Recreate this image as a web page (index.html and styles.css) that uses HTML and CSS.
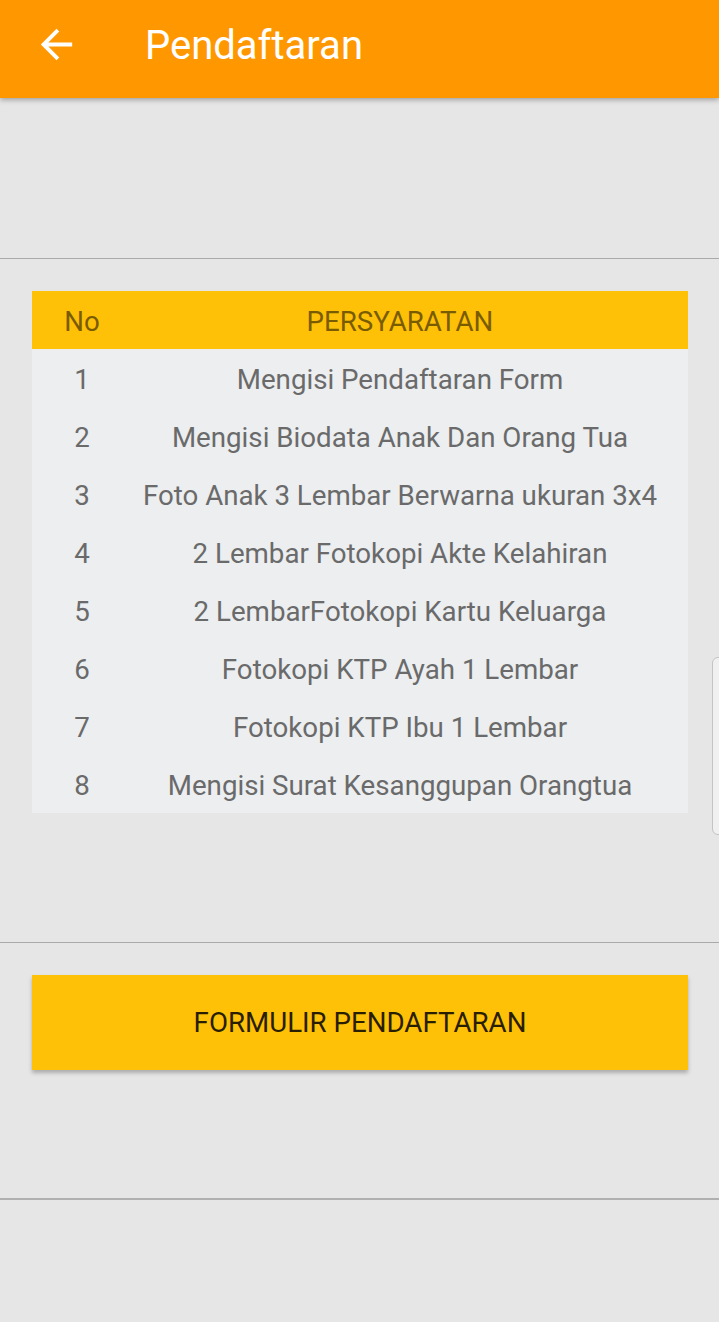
FILE: index.html
```html
<!DOCTYPE html>
<html>
<head>
<meta charset="utf-8">
<link rel="stylesheet" href="styles.css">
</head>
<body>
<header class="appbar">
  <svg class="back" viewBox="0 0 24 24" width="47" height="47"><path fill="#fff" d="M20 11H7.83l5.59-5.59L12 4l-8 8 8 8 1.41-1.41L7.83 13H20v-2z"/></svg>
  <h1 class="title">Pendaftaran</h1>
</header>
<main class="content">
  <div class="spacer-top"></div>
  <hr class="divider">
  <section class="table">
    <div class="thead">
      <div class="c-no">No</div>
      <div class="c-text">PERSYARATAN</div>
    </div>
    <div class="row"><div class="c-no">1</div><div class="c-text">Mengisi Pendaftaran Form</div></div>
    <div class="row"><div class="c-no">2</div><div class="c-text">Mengisi Biodata Anak Dan Orang Tua</div></div>
    <div class="row"><div class="c-no">3</div><div class="c-text">Foto Anak 3 Lembar Berwarna ukuran 3x4</div></div>
    <div class="row"><div class="c-no">4</div><div class="c-text">2 Lembar Fotokopi Akte Kelahiran</div></div>
    <div class="row"><div class="c-no">5</div><div class="c-text">2 LembarFotokopi Kartu Keluarga</div></div>
    <div class="row"><div class="c-no">6</div><div class="c-text">Fotokopi KTP Ayah 1 Lembar</div></div>
    <div class="row"><div class="c-no">7</div><div class="c-text">Fotokopi KTP Ibu 1 Lembar</div></div>
    <div class="row"><div class="c-no">8</div><div class="c-text">Mengisi Surat Kesanggupan Orangtua</div></div>
  </section>
  <hr class="divider mid">
  <button class="btn">FORMULIR PENDAFTARAN</button>
  <hr class="divider bottom">
</main>
<div class="scroll-edge"></div>
</body>
</html>
```
FILE: styles.css
```css
* { box-sizing: border-box; }
html, body { margin: 0; padding: 0; }
body {
  width: 719px;
  height: 1322px;
  background: #e6e6e6;
  font-family: Roboto, "Noto Sans", sans-serif;
  overflow: hidden;
  position: relative;
}
.appbar {
  height: 98px;
  background: #ff9800;
  display: flex;
  align-items: center;
  box-shadow: 0 2px 5px rgba(0,0,0,0.3);
  position: relative;
  z-index: 2;
}
.back {
  margin-left: 33px;
  margin-top: -10px;
  flex: none;
}
.title {
  margin: 0 0 0 65px;
  margin-top: -8px;
  color: #fff;
  font-weight: 400;
  font-size: 40px;
}
.content {
  display: flex;
  flex-direction: column;
}
.spacer-top { height: 160px; }
.divider {
  margin: 0;
  border: 0;
  height: 1px;
  background: #aaaaaa;
}
.table {
  margin: 32px 31px 0 32px;
  background: #eceef0;
}
.thead, .row {
  display: grid;
  grid-template-columns: 100px 1fr;
  align-items: center;
  font-size: 27.7px;
  padding-top: 2px;
}
.thead {
  height: 58px;
  background: #ffc107;
  color: #7a5c00;
}
.row {
  height: 58px;
  color: #6a6a6a;
}
.c-no { text-align: center; }
.c-text { text-align: center; padding-right: 20px; }
.divider.mid { margin-top: 129px; }
.btn {
  margin: 32px 31px 0 32px;
  height: 95px;
  border: 0;
  background: #ffc107;
  color: #2a1e00;
  font-family: Roboto, sans-serif;
  font-size: 27.7px;
  box-shadow: 0 3px 4px rgba(0,0,0,0.25);
}
.divider.bottom {
  margin-top: 128px;
  height: 2px;
  background: #b0b0b0;
}
.scroll-edge {
  position: absolute;
  left: 712px;
  top: 657px;
  width: 14px;
  height: 178px;
  border: 1px solid #c4c4c4;
  border-radius: 6px;
  background: #f0f0f0;
}
```
